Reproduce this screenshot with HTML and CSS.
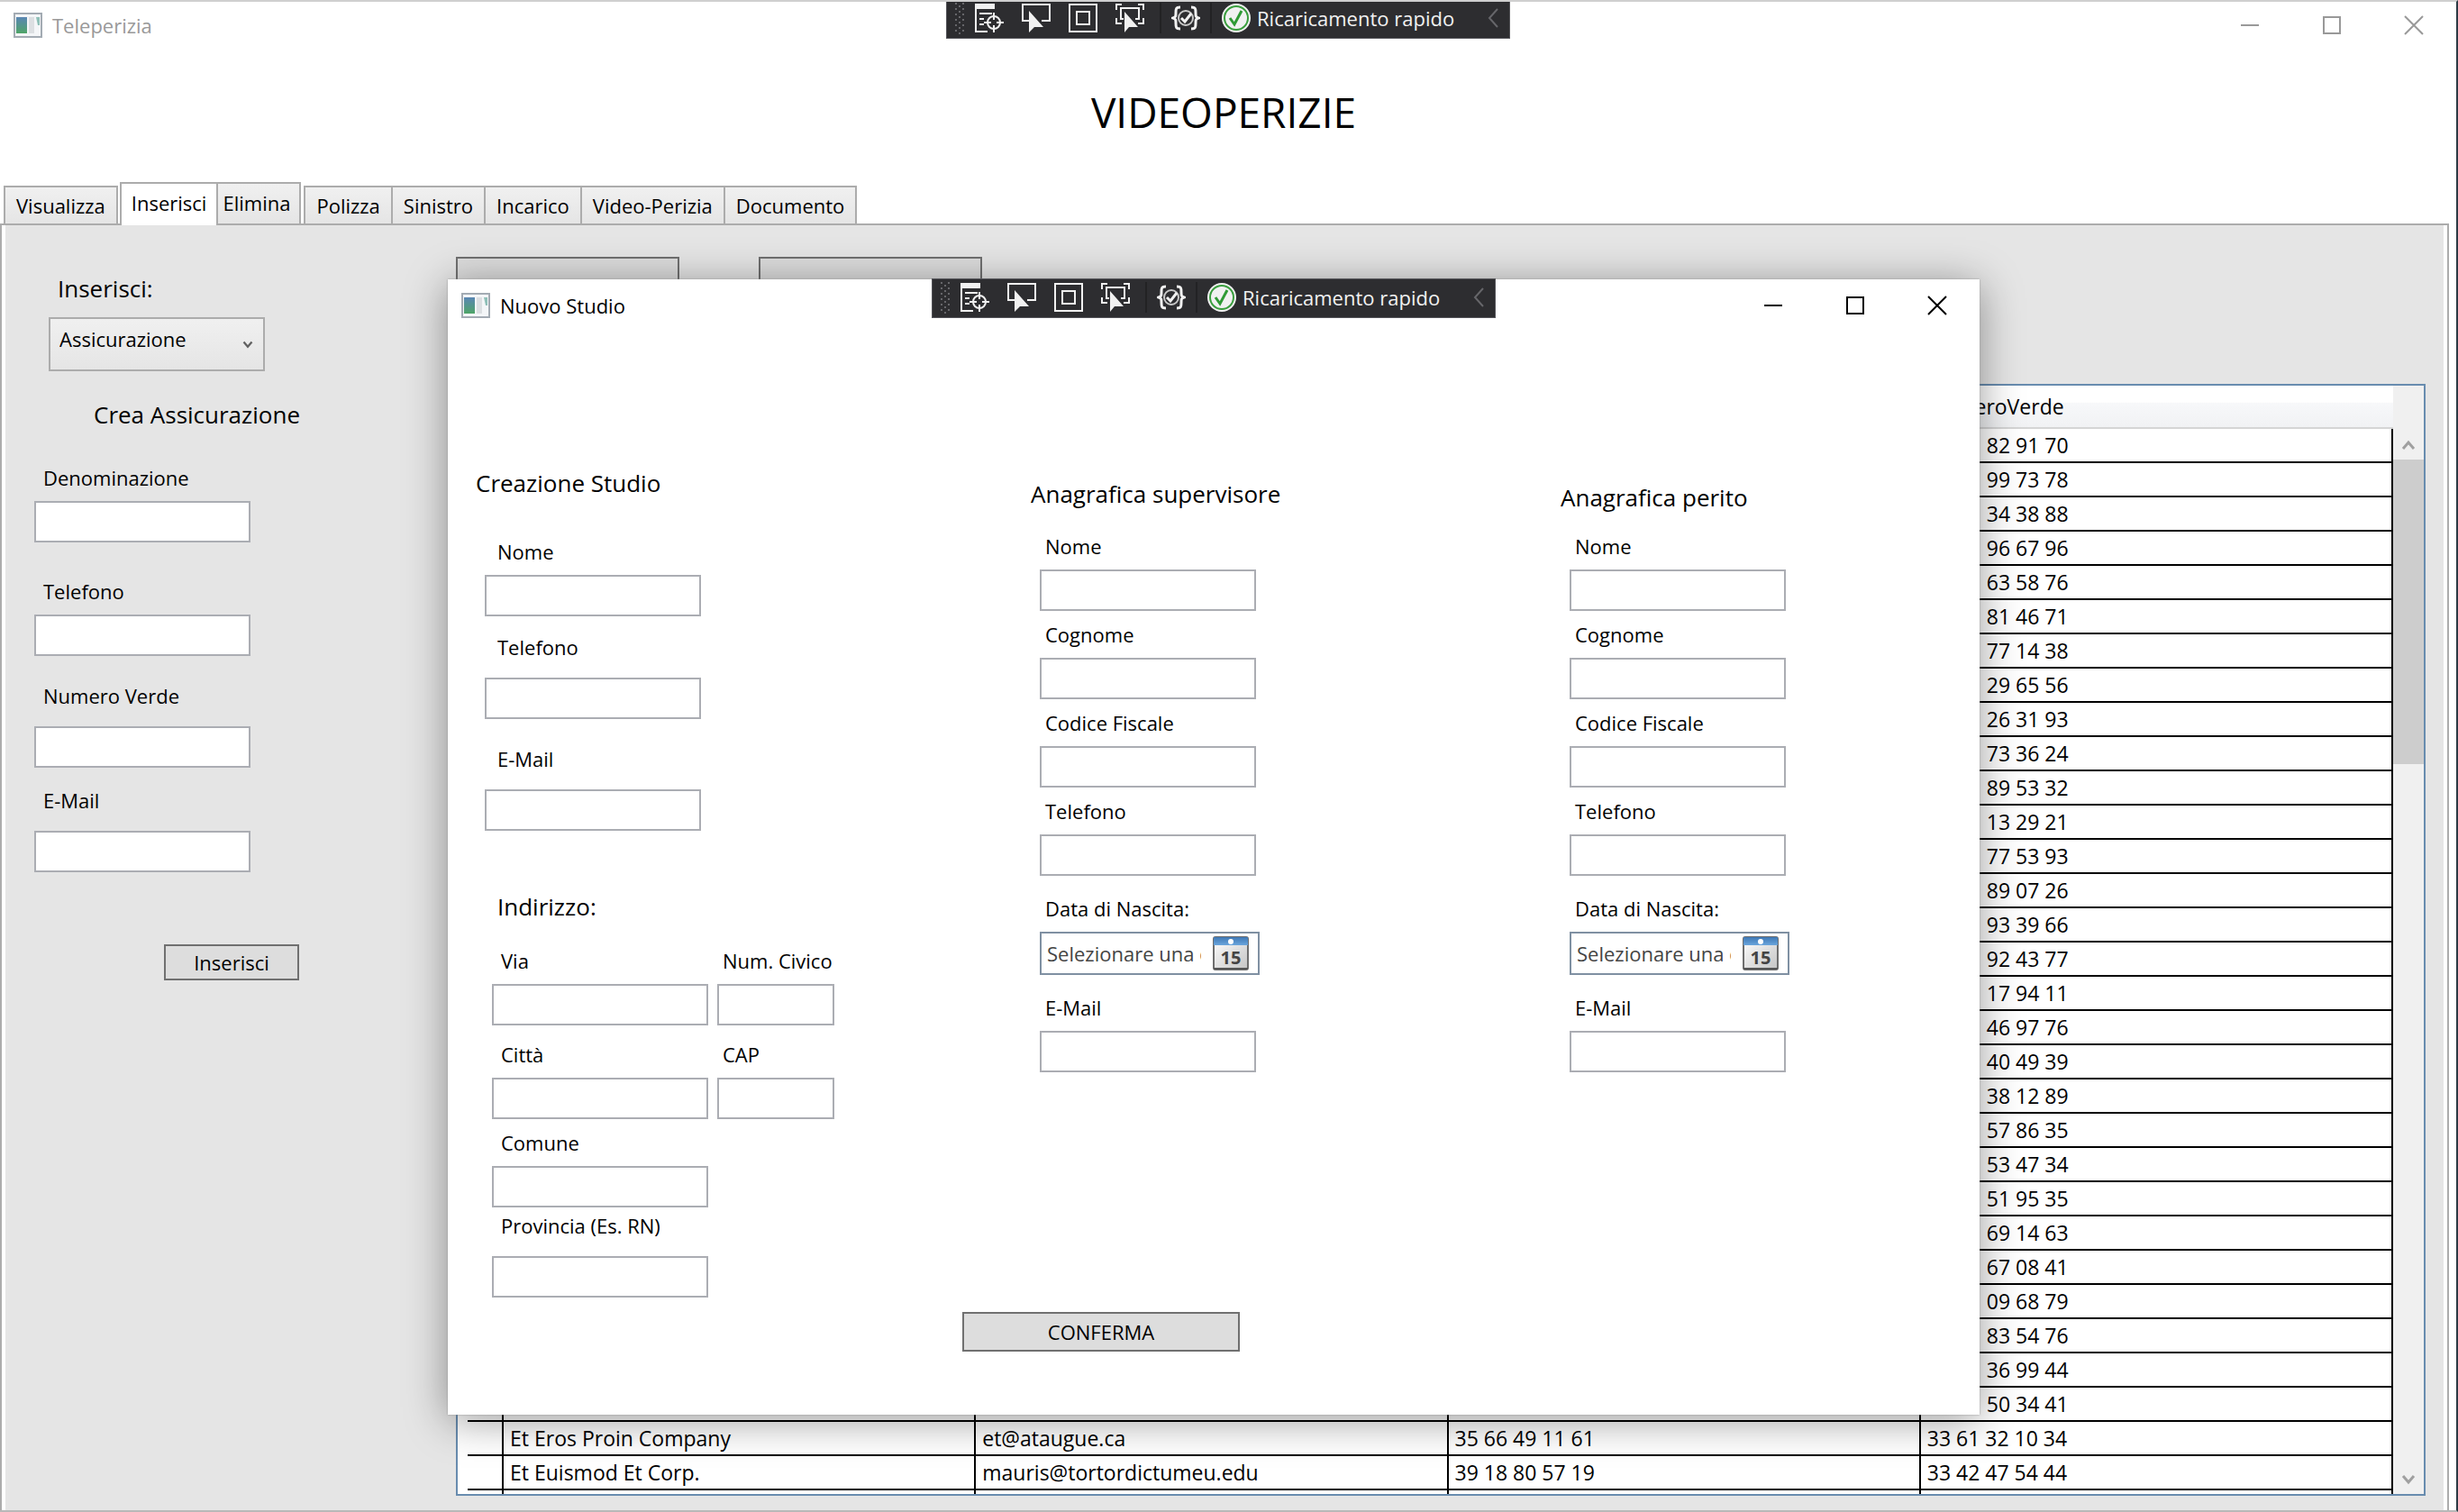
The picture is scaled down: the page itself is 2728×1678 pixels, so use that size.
FILE: index.html
```html
<!DOCTYPE html>
<html lang="it">
<head>
<meta charset="utf-8">
<title>Teleperizia</title>
<link rel="stylesheet" href="styles.css">
</head>
<body>
<svg class="sprite" aria-hidden="true">
  <defs>
    <linearGradient id="pane" x1="0" y1="0" x2="0" y2="1">
      <stop offset="0" stop-color="#5a86b4"/><stop offset="1" stop-color="#4fa568"/>
    </linearGradient>
    <linearGradient id="calTop" x1="0" y1="0" x2="0" y2="1">
      <stop offset="0" stop-color="#3f78b5"/><stop offset="1" stop-color="#6aa5dc"/>
    </linearGradient>
    <linearGradient id="calPage" x1="0" y1="0" x2="1" y2="1">
      <stop offset="0" stop-color="#ffffff"/><stop offset="1" stop-color="#c4c4c4"/>
    </linearGradient>
    <symbol id="app" viewBox="0 0 32 28">
      <rect x="1" y="1" width="30" height="26" fill="#f4f6f8" stroke="#a3abb3" stroke-width="2"/>
      <rect x="3" y="5" width="12" height="18" fill="url(#pane)"/>
      <rect x="17" y="5" width="6" height="18" fill="#dcdfe2"/>
      <path d="M25 5h4v9h-2z" fill="#8fc0b8"/>
    </symbol>
    <symbol id="min" viewBox="0 0 22 22"><path d="M1 11h20" stroke="currentColor" stroke-width="2"/></symbol>
    <symbol id="max" viewBox="0 0 22 22"><rect x="2" y="2" width="18" height="18" fill="none" stroke="currentColor" stroke-width="2"/></symbol>
    <symbol id="close" viewBox="0 0 22 22"><path d="M1 1l20 20M21 1L1 21" stroke="currentColor" stroke-width="2"/></symbol>
    <symbol id="grip" viewBox="0 0 12 36">
      <path d="M2 1v36M10 1v36" stroke="#66666a" stroke-width="2" stroke-dasharray="2 4"/>
      <path d="M6 4v32" stroke="#66666a" stroke-width="2" stroke-dasharray="2 4"/>
    </symbol>
    <symbol id="tree" viewBox="0 0 32 32">
      <path d="M0 0h22v6H0z" fill="#f1f1f1"/>
      <path d="M1 4v27h13M5 11h10M5 17h5M5 23h5M5 11h14" fill="none" stroke="#f1f1f1" stroke-width="2"/>
      <circle cx="21" cy="21" r="7" fill="none" stroke="#f1f1f1" stroke-width="2"/>
      <path d="M21 10v8M21 24v8M10 21h8M24 21h8" stroke="#f1f1f1" stroke-width="2"/>
    </symbol>
    <symbol id="pick" viewBox="0 0 32 32">
      <path d="M8 19H1V1h30v18h-9" fill="none" stroke="#f1f1f1" stroke-width="2"/>
      <path d="M8 8v24l6-6h10z" fill="#f1f1f1"/>
    </symbol>
    <symbol id="layout" viewBox="0 0 32 32">
      <rect x="1" y="1" width="30" height="30" fill="none" stroke="#f1f1f1" stroke-width="2"/>
      <rect x="9" y="9" width="14" height="14" fill="none" stroke="#f1f1f1" stroke-width="2"/>
    </symbol>
    <symbol id="track" viewBox="0 0 32 32">
      <path d="M1 7V1h6M25 1h6v6M31 16v6h-6M1 16v6h6" fill="none" stroke="#f1f1f1" stroke-width="2"/>
      <path d="M9 17H6V5h20v12h-4" fill="none" stroke="#f1f1f1" stroke-width="2"/>
      <path d="M10 9v23l5-6h10z" fill="#f1f1f1"/>
    </symbol>
    <symbol id="binding" viewBox="0 0 32 32">
      <path d="M10 4C5 4 5 6 5 10s0 5-3 6c3 1 3 2 3 6s0 6 5 6M22 4c5 0 5 2 5 6s0 5 3 6c-3 1-3 2-3 6s0 6-5 6" fill="none" stroke="#f1f1f1" stroke-width="3"/>
      <circle cx="16" cy="16" r="8" fill="none" stroke="#c8c8c8" stroke-width="2"/>
      <path d="M11 16l4 4 7-9" fill="none" stroke="#f1f1f1" stroke-width="3"/>
    </symbol>
    <symbol id="ok" viewBox="0 0 32 32">
      <circle cx="16" cy="16" r="16" fill="#f1f1f1"/>
      <circle cx="16" cy="16" r="13" fill="none" stroke="#3a9e3e" stroke-width="2"/>
      <path d="M9 16l5 7 8-15" fill="none" stroke="#2f9a35" stroke-width="3"/>
    </symbol>
    <symbol id="back" viewBox="0 0 12 22"><path d="M11 1L2 11l9 10" fill="none" stroke="#66666a" stroke-width="2"/></symbol>
    <symbol id="up" viewBox="0 0 16 12"><path d="M2 10l6-7 6 7" fill="none" stroke="currentColor" stroke-width="3"/></symbol>
    <symbol id="down" viewBox="0 0 16 12"><path d="M2 2l6 7 6-7" fill="none" stroke="currentColor" stroke-width="3"/></symbol>
    <symbol id="calendar" viewBox="0 0 40 38">
      <rect x="1" y="1" width="38" height="36" rx="2" fill="url(#calPage)" stroke="#6e6e6e" stroke-width="2"/>
      <path d="M1 1h38v9H1z" fill="url(#calTop)"/>
      <circle cx="20" cy="6" r="3" fill="#fff"/>
      <path d="M1 36h38" stroke="#555" stroke-width="2"/>
      <text x="20" y="31" text-anchor="middle" class="cal-day">15</text>
    </symbol>
  </defs>
</svg>

<div class="window">
  <header class="titlebar inactive">
    <svg class="app-icon"><use href="#app"/></svg>
    <span class="caption">Teleperizia</span>
    <div class="win-buttons">
      <button aria-label="Riduci a icona"><svg><use href="#min"/></svg></button>
      <button aria-label="Ingrandisci"><svg><use href="#max"/></svg></button>
      <button aria-label="Chiudi"><svg><use href="#close"/></svg></button>
    </div>
  </header>
  <h1 class="page-title">VIDEOPERIZIE</h1>

  <nav class="tabs">
    <button class="tab">Visualizza</button>
    <button class="tab tab-active">Inserisci</button>
    <button class="tab tab-raised">Elimina</button>
    <button class="tab">Polizza</button>
    <button class="tab">Sinistro</button>
    <button class="tab">Incarico</button>
    <button class="tab">Video-Perizia</button>
    <button class="tab">Documento</button>
  </nav>

  <main class="panel">
    <form class="sidebar">
      <label class="heading" for="tipo">Inserisci:</label>
      <div class="combo">
        <select id="tipo"><option>Assicurazione</option></select>
        <svg><use href="#down"/></svg>
      </div>
      <h2 class="heading sub">Crea Assicurazione</h2>
      <div class="field mt-38"><label for="a-den">Denominazione</label><input id="a-den" type="text"></div>
      <div class="field mt-40"><label for="a-tel">Telefono</label><input id="a-tel" type="text"></div>
      <div class="field loose mt-30"><label for="a-num">Numero Verde</label><input id="a-num" type="text"></div>
      <div class="field loose mt-22"><label for="a-mail">E-Mail</label><input id="a-mail" type="text"></div>
      <button class="btn insert" type="button">Inserisci</button>
    </form>

    <section class="content">
      <div class="actions">
        <button class="btn" aria-label="Azione 1"></button>
        <button class="btn" aria-label="Azione 2"></button>
      </div>
      <div class="grid">
        <div class="rows">
        <table>
          <colgroup><col class="row-head"><col><col><col><col></colgroup>
          <thead><tr><th></th><th></th><th></th><th></th><th>NumeroVerde</th></tr></thead>
          <tbody>
            <tr><td></td><td></td><td></td><td></td><td class="tail">82 91 70</td></tr>
            <tr><td></td><td></td><td></td><td></td><td class="tail">99 73 78</td></tr>
            <tr><td></td><td></td><td></td><td></td><td class="tail">34 38 88</td></tr>
            <tr><td></td><td></td><td></td><td></td><td class="tail">96 67 96</td></tr>
            <tr><td></td><td></td><td></td><td></td><td class="tail">63 58 76</td></tr>
            <tr><td></td><td></td><td></td><td></td><td class="tail">81 46 71</td></tr>
            <tr><td></td><td></td><td></td><td></td><td class="tail">77 14 38</td></tr>
            <tr><td></td><td></td><td></td><td></td><td class="tail">29 65 56</td></tr>
            <tr><td></td><td></td><td></td><td></td><td class="tail">26 31 93</td></tr>
            <tr><td></td><td></td><td></td><td></td><td class="tail">73 36 24</td></tr>
            <tr><td></td><td></td><td></td><td></td><td class="tail">89 53 32</td></tr>
            <tr><td></td><td></td><td></td><td></td><td class="tail">13 29 21</td></tr>
            <tr><td></td><td></td><td></td><td></td><td class="tail">77 53 93</td></tr>
            <tr><td></td><td></td><td></td><td></td><td class="tail">89 07 26</td></tr>
            <tr><td></td><td></td><td></td><td></td><td class="tail">93 39 66</td></tr>
            <tr><td></td><td></td><td></td><td></td><td class="tail">92 43 77</td></tr>
            <tr><td></td><td></td><td></td><td></td><td class="tail">17 94 11</td></tr>
            <tr><td></td><td></td><td></td><td></td><td class="tail">46 97 76</td></tr>
            <tr><td></td><td></td><td></td><td></td><td class="tail">40 49 39</td></tr>
            <tr><td></td><td></td><td></td><td></td><td class="tail">38 12 89</td></tr>
            <tr><td></td><td></td><td></td><td></td><td class="tail">57 86 35</td></tr>
            <tr><td></td><td></td><td></td><td></td><td class="tail">53 47 34</td></tr>
            <tr><td></td><td></td><td></td><td></td><td class="tail">51 95 35</td></tr>
            <tr><td></td><td></td><td></td><td></td><td class="tail">69 14 63</td></tr>
            <tr><td></td><td></td><td></td><td></td><td class="tail">67 08 41</td></tr>
            <tr><td></td><td></td><td></td><td></td><td class="tail">09 68 79</td></tr>
            <tr><td></td><td></td><td></td><td></td><td class="tail">83 54 76</td></tr>
            <tr><td></td><td></td><td></td><td></td><td class="tail">36 99 44</td></tr>
            <tr><td></td><td></td><td></td><td></td><td class="tail">50 34 41</td></tr>
            <tr><td></td><td>Et Eros Proin Company</td><td>et@ataugue.ca</td><td>35 66 49 11 61</td><td>33 61 32 10 34</td></tr>
            <tr><td></td><td>Et Euismod Et Corp.</td><td>mauris@tortordictumeu.edu</td><td>39 18 80 57 19</td><td>33 42 47 54 44</td></tr>
            <tr><td></td><td></td><td></td><td></td><td></td></tr>
          </tbody>
        </table>
        </div>
        <div class="scrollbar">
          <svg><use href="#up"/></svg>
          <div class="track"><div class="thumb"></div></div>
          <svg><use href="#down"/></svg>
        </div>
      </div>
    </section>
  </main>

  <div class="debugbar debugbar-main">
    <svg class="grip"><use href="#grip"/></svg>
    <svg class="tool"><use href="#tree"/></svg>
    <svg class="tool"><use href="#pick"/></svg>
    <svg class="tool"><use href="#layout"/></svg>
    <svg class="tool"><use href="#track"/></svg>
    <i></i>
    <svg class="tool small"><use href="#binding"/></svg>
    <i></i>
    <svg class="tool"><use href="#ok"/></svg>
    <span>Ricaricamento rapido</span>
    <svg class="back"><use href="#back"/></svg>
  </div>

  <div class="dialog" role="dialog" aria-label="Nuovo Studio">
    <header class="titlebar">
      <svg class="app-icon"><use href="#app"/></svg>
      <span class="caption">Nuovo Studio</span>
      <div class="win-buttons">
        <button aria-label="Riduci a icona"><svg><use href="#min"/></svg></button>
        <button aria-label="Ingrandisci"><svg><use href="#max"/></svg></button>
        <button aria-label="Chiudi"><svg><use href="#close"/></svg></button>
      </div>
    </header>
    <form>
      <div class="columns">
        <section class="studio">
          <h2 class="heading">Creazione Studio</h2>
          <div class="contact">
            <div class="field mt-44"><label for="s-nome">Nome</label><input id="s-nome" type="text"></div>
            <div class="field loose mt-20"><label for="s-tel">Telefono</label><input id="s-tel" type="text"></div>
            <div class="field loose mt-30"><label for="s-mail">E-Mail</label><input id="s-mail" type="text"></div>
          </div>
          <div class="address">
            <h3 class="heading">Indirizzo:</h3>
            <div class="pair mt-28">
              <div class="field"><label for="s-via">Via</label><input id="s-via" type="text"></div>
              <div class="field short"><label for="s-civ">Num. Civico</label><input id="s-civ" type="text"></div>
            </div>
            <div class="pair mt-18">
              <div class="field"><label for="s-cit">Città</label><input id="s-cit" type="text"></div>
              <div class="field short"><label for="s-cap">CAP</label><input id="s-cap" type="text"></div>
            </div>
            <div class="field mt-12"><label for="s-com">Comune</label><input id="s-com" type="text"></div>
            <div class="field loose mt-6"><label for="s-prov">Provincia (Es. RN)</label><input id="s-prov" type="text"></div>
          </div>
        </section>

        <section class="person supervisor">
          <h2 class="heading">Anagrafica supervisore</h2>
          <div class="fields">
            <div class="field"><label for="v-nome">Nome</label><input id="v-nome" type="text"></div>
            <div class="field mt-12"><label for="v-cog">Cognome</label><input id="v-cog" type="text"></div>
            <div class="field mt-12"><label for="v-cf">Codice Fiscale</label><input id="v-cf" type="text"></div>
            <div class="field mt-12"><label for="v-tel">Telefono</label><input id="v-tel" type="text"></div>
            <div class="field mt-22"><label for="v-data">Data di Nascita:</label>
              <div class="date"><input id="v-data" type="text" placeholder="Selezionare una data"><button type="button" aria-label="Apri calendario"><svg><use href="#calendar"/></svg></button></div></div>
            <div class="field mt-22"><label for="v-mail">E-Mail</label><input id="v-mail" type="text"></div>
          </div>
        </section>

        <section class="person expert">
          <h2 class="heading">Anagrafica perito</h2>
          <div class="fields">
            <div class="field"><label for="p-nome">Nome</label><input id="p-nome" type="text"></div>
            <div class="field mt-12"><label for="p-cog">Cognome</label><input id="p-cog" type="text"></div>
            <div class="field mt-12"><label for="p-cf">Codice Fiscale</label><input id="p-cf" type="text"></div>
            <div class="field mt-12"><label for="p-tel">Telefono</label><input id="p-tel" type="text"></div>
            <div class="field mt-22"><label for="p-data">Data di Nascita:</label>
              <div class="date"><input id="p-data" type="text" placeholder="Selezionare una data"><button type="button" aria-label="Apri calendario"><svg><use href="#calendar"/></svg></button></div></div>
            <div class="field mt-22"><label for="p-mail">E-Mail</label><input id="p-mail" type="text"></div>
          </div>
        </section>
      </div>
      <button class="btn confirm" type="button">CONFERMA</button>
    </form>

    <div class="debugbar debugbar-dialog">
      <svg class="grip"><use href="#grip"/></svg>
      <svg class="tool"><use href="#tree"/></svg>
      <svg class="tool"><use href="#pick"/></svg>
      <svg class="tool"><use href="#layout"/></svg>
      <svg class="tool"><use href="#track"/></svg>
      <i></i>
      <svg class="tool small"><use href="#binding"/></svg>
      <i></i>
      <svg class="tool"><use href="#ok"/></svg>
      <span>Ricaricamento rapido</span>
      <svg class="back"><use href="#back"/></svg>
    </div>
  </div>
</div>
</body>
</html>
```
FILE: styles.css
```css
* { box-sizing: border-box; }

body {
  margin: 0;
  font: 22px/32px "Open Sans", "Noto Sans", sans-serif;
  color: #000;
  background: #fff;
}

button, input, select { font: inherit; color: inherit; border-radius: 0; margin: 0; }
h1, h2, h3 { margin: 0; font-weight: 400; }
svg { display: block; flex: none; }
.sprite { position: absolute; width: 0; height: 0; }

.window {
  position: relative;
  display: flex;
  flex-direction: column;
  height: 100vh;
  overflow: hidden;
  border-top: 2px solid #cfcfcf;
  border-right: 2px solid #2b3a44;
  border-bottom: 2px solid #b8b8b8;
}

/* title bars */
.titlebar {
  display: flex;
  align-items: center;
  height: 52px;
  padding: 0 2px 0 15px;
}
.app-icon { width: 32px; height: 28px; }
.caption { padding-left: 11px; }
.inactive .caption { color: #999; }
.win-buttons { display: flex; margin-left: auto; }
.win-buttons button {
  display: flex;
  align-items: center;
  justify-content: center;
  width: 91px;
  height: 50px;
  padding: 0;
  border: 0;
  background: none;
}
.inactive .win-buttons { color: #999; }
.win-buttons svg { width: 22px; height: 22px; }

.page-title {
  padding: 38px 10px 0 0;
  height: 148px;
  font-size: 46px;
  line-height: 64px;
  text-align: center;
}

/* tabs */
.tabs {
  display: flex;
  align-items: flex-end;
  height: 46px;
  padding-left: 4px;
}
.tab {
  height: 42px;
  padding: 0 12px;
  margin-right: -2px;
  border: 2px solid #acacac;
  border-bottom: 0;
  background: linear-gradient(#f0f0f0, #e5e5e5);
}
.tab-active {
  position: relative;
  z-index: 1;
  height: 48px;
  margin: 0 -2px -2px 4px;
  padding: 0 11px 4px;
  background: #fff;
}
.tab-raised { height: 46px; padding: 0 10px 2px 5px; margin-right: 3px; }

.panel {
  flex: 1;
  display: flex;
  min-height: 0;
  border: 2px solid #acacac;
  border-bottom: 0;
  margin-right: 8px;
  background: #e5e5e5;
  box-shadow: inset 4px 0 #fff, inset -4px 0 #fff;
}

/* shared controls */
.heading { display: block; font-size: 26px; line-height: 36px; }
.field { display: flex; flex-direction: column; width: 240px; }
.field label { padding-left: 10px; margin-bottom: 12px; line-height: 28px; white-space: nowrap; }
.field.loose label { margin-bottom: 20px; }
.field > input {
  height: 46px;
  width: 100%;
  padding: 0 6px;
  border: 2px solid #abadb3;
  background: #fff;
}
.field.short { width: 130px; }
.btn {
  border: 2px solid #707070;
  background: #ddd;
  padding: 0;
}
.mt-6 { margin-top: 6px; }
.mt-12 { margin-top: 12px; }
.mt-18 { margin-top: 18px; }
.mt-20 { margin-top: 20px; }
.mt-22 { margin-top: 22px; }
.mt-28 { margin-top: 28px; }
.mt-30 { margin-top: 30px; }
.mt-38 { margin-top: 38px; }
.mt-40 { margin-top: 40px; }
.mt-44 { margin-top: 44px; }

/* left form */
.sidebar { flex: none; width: 504px; padding: 52px 0 0 36px; }
.sidebar > label { padding-left: 26px; }
.combo { display: grid; width: 240px; margin: 14px 0 0 16px; }
.combo select {
  grid-area: 1 / 1;
  height: 60px;
  padding: 0 10px 12px;
  border: 2px solid #acacac;
  appearance: none;
  background: linear-gradient(#f0f0f0, #e5e5e5);
}
.combo svg { grid-area: 1 / 1; align-self: center; justify-self: end; width: 12px; height: 9px; margin-right: 13px; color: #606060; }
.sub { padding-left: 66px; margin-top: 30px; }
.insert { display: block; width: 150px; height: 40px; margin: 80px 0 0 144px; line-height: 34px; }

/* data grid */
.content { flex: 1; display: flex; flex-direction: column; min-width: 0; padding: 35px 24px 16px 0; }
.actions { display: flex; gap: 88px; padding-bottom: 81px; }
.actions .btn { width: 248px; height: 60px; }
.grid {
  flex: 1;
  display: flex;
  align-items: flex-start;
  min-height: 0;
  overflow: hidden;
  border: 2px solid #688caf;
  background: #fff;
}
.rows { flex: 1; min-width: 0; padding-left: 11px; }
table {
  width: 100%;
  table-layout: fixed;
  border-spacing: 0;
  font-size: 23px;
}
.row-head { width: 40px; }
th, td { padding: 0 7px; text-align: left; font-weight: 400; white-space: nowrap; }
th {
  height: 48px;
  border-bottom: 2px solid #d5d5d5;
  background: linear-gradient(#fff 0 40%, #f7f8fa 41%, #f1f2f4);
}
td { height: 38px; line-height: 36px; border: solid #000; border-width: 0 2px 2px 0; }
.tail { padding-left: 73px; }
.scrollbar {
  align-self: stretch;
  display: flex;
  flex-direction: column;
  align-items: center;
  width: 34px;
  padding: 60px 0 10px;
  background: #f0f0f0;
  color: #a0a0a0;
}
.scrollbar svg { width: 16px; height: 12px; }
.track { flex: 1; align-self: stretch; padding-top: 10px; }
.thumb { height: 30%; background: #cdcdcd; }

/* debugging toolbar */
.debugbar {
  position: absolute;
  display: flex;
  align-items: center;
  height: 44px;
  width: 626px;
  padding: 0 12px 2px 8px;
  border: 1px solid #55555a;
  background: #2d2d30;
  color: #f1f1f1;
}
.debugbar-main { top: -3px; left: 1050px; }
.debugbar-dialog { top: -1px; left: 537px; }
.debugbar .grip { width: 12px; height: 36px; margin-right: 11px; }
.tool { width: 32px; height: 32px; margin-right: 20px; }
.debugbar i { width: 2px; height: 34px; margin-left: -3px; background: #222224; }
.debugbar i + .tool { margin-left: 11px; }
.tool.small { margin-right: 14px; }
.debugbar i:nth-of-type(2) + .tool { margin-right: 7px; }
.debugbar .back { width: 12px; height: 22px; margin-left: auto; }

/* dialog */
.dialog {
  position: absolute;
  top: 308px;
  left: 497px;
  right: 529px;
  background: #fff;
  box-shadow: 0 0 2px #999, 0 6px 44px rgba(0, 0, 0, 0.4);
}
.dialog .titlebar { height: 58px; }
.columns { display: grid; grid-template-columns: 647fr 588fr 465fr; }
.studio { padding: 150px 0 0 31px; }
.contact { padding-left: 10px; }
.contact label { padding-left: 14px; }
.address { padding: 66px 0 0 18px; }
.address .heading { padding-left: 6px; }
.pair { display: flex; gap: 10px; }
.short label { padding-left: 6px; }
.supervisor { padding-top: 162px; }
.expert { padding-top: 166px; }
.fields { padding: 26px 0 0 10px; }
.expert .fields { padding-top: 22px; }
.fields label { padding-left: 6px; }
.date {
  display: flex;
  align-items: center;
  width: 244px;
  height: 48px;
  border: 2px solid #7f90a2;
  background: #fff;
}
.date input { width: 177px; padding: 0 0 0 6px; border: 0; background: none; }
.date input::placeholder { color: #444; opacity: 1; }
.date button { padding: 0; margin-left: 13px; border: 0; background: none; }
.date svg { width: 40px; height: 38px; }
.cal-day { font: 700 20px "Open Sans", sans-serif; fill: #444; }
.confirm { display: block; width: 308px; height: 44px; margin: 16px 0 70px 571px; }
```
